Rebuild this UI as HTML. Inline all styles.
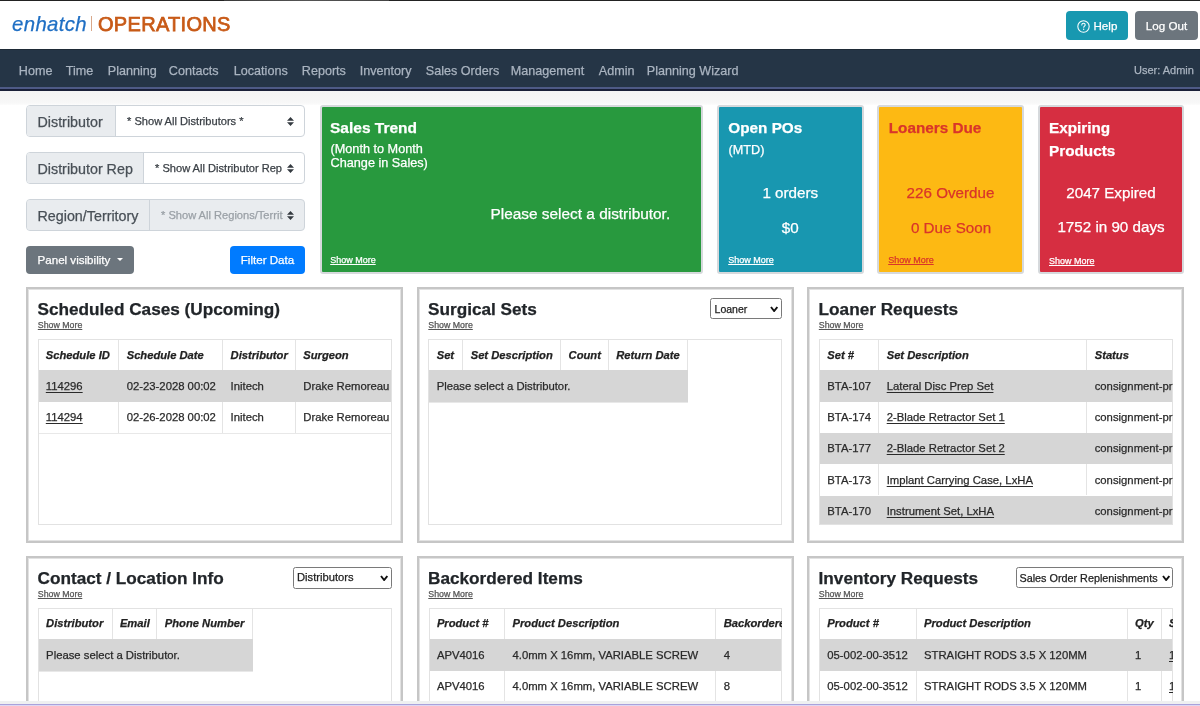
<!DOCTYPE html>
<html><head><meta charset="utf-8">
<style>
*{box-sizing:border-box;margin:0;padding:0}
html,body{width:1200px;height:706px;overflow:hidden;background:#fff;text-decoration-skip-ink:none;-webkit-text-stroke:0.25px currentColor;font-family:"Liberation Sans",sans-serif;color:#212529}
.abs{position:absolute}
#topline{left:0;top:0;width:1200px;height:1px;background:#222}
#header{left:0;top:1px;width:1200px;height:48px;background:#fff}
.logo1{left:12px;top:13px;font-size:20.4px;letter-spacing:0.35px;color:#1f6fc4;font-style:italic;line-height:1.15}
.logosep{left:90.5px;top:16px;width:1.2px;height:15px;background:#d9a88a}
.logo2{left:98px;top:12.5px;font-size:20px;font-weight:normal;-webkit-text-stroke:0.75px #c85a17;color:#c85a17;letter-spacing:0.3px;line-height:1.15}
.btn{position:absolute;border-radius:4px;color:#fff;font-size:12px;text-align:center;line-height:30px}
#help{left:1066px;top:11px;width:62px;height:29px;background:#1898b0;font-size:11.6px}
#logout{left:1135px;top:11px;width:63px;height:29px;background:#6c757d;font-size:11.6px}
#nav{left:0;top:49px;width:1200px;height:38px;background:#253546;border-top:1px solid #1e2a36}
#navline{left:0;top:87px;width:1200px;height:2px;background:#4e5a86}
#navline2{left:0;top:89px;width:1200px;height:1.5px;background:#1a2038}
.ni{position:absolute;top:64.4px;font-size:12.6px;color:#aab4c0;white-space:nowrap;line-height:1.15}
#shadow{left:0;top:90.5px;width:1200px;height:14px;background:linear-gradient(#f4f4f4,#f7f7f7 80%,#fcfcfc)}

.ig{position:absolute;left:26px;width:279px;height:32px;border:1px solid #ced4da;border-radius:4px;background:#fff;overflow:hidden}
.ig .lab{position:absolute;left:0;top:0;bottom:0;background:#e9ecef;border-right:1px solid #ced4da;font-size:14.3px;color:#495057;padding-left:10.5px;line-height:30px;padding-top:0.5px}
.ig .sel{position:absolute;top:0;bottom:0;right:0;font-size:11.1px;color:#3b4046;line-height:30px;padding-top:0px}
.updown{position:absolute;left:260px;top:11px;width:7px;height:9px}

.card{position:absolute;top:105px;height:169px;border:2px solid #d6d9dc;border-radius:3px;color:#fff}
.card .t{position:absolute;left:9px;top:11px;font-size:15.5px;font-weight:bold;line-height:23px}
.card .s{position:absolute;left:9px;font-size:11.5px;line-height:13.6px}
.card .c{position:absolute;left:0;right:0;text-align:center;font-size:14.5px}
.card .sm{position:absolute;left:9px;top:148px;font-size:9px;text-decoration:underline}

.panel{position:absolute;border:2px solid #c6c6c6;background:#fff;box-shadow:inset 0 0 0 1px #e2e2e2}
.ptitle{position:absolute;font-size:18px;font-weight:bold;color:#212529;white-space:nowrap}
.psm{position:absolute;font-size:9px;color:#555;text-decoration:underline;white-space:nowrap}
.tbl{position:absolute;border:1px solid #dee2e6;overflow:hidden;background:#fff}
.tbl table{border-collapse:collapse;font-size:11.5px;color:#212529}
.tbl td,.tbl th{height:31.3px;padding:0 8px;white-space:nowrap;text-align:left;border-right:1px solid #dee2e6}
.tbl th{font-style:italic;font-weight:bold}
.g{background:#d6d6d6}
.u{text-decoration:underline}
.psel{position:absolute;border:1px solid #767676;border-radius:3px;background:#fff;font-size:11.5px;color:#000;padding-left:3px;line-height:19px}
.chev{position:absolute;right:5px;top:6px;width:9px;height:7px}
#botline{left:0;top:704px;width:1200px;height:2px;background:#b7b2e0}
</style></head><body><div style="will-change:transform;position:absolute;left:0;top:0;width:1200px;height:706px">
<div id="topline" class="abs"></div><div class="abs" style="left:224px;top:0;width:165px;height:1px;background:linear-gradient(90deg,#3a3a3a,#555 50%,#444)"></div>
<div id="header" class="abs"></div>
<div class="abs logo1">enhatch</div>
<div class="abs logosep"></div>
<div class="abs logo2">OPERATIONS</div>
<div id="help" class="btn"><svg width="13" height="13" viewBox="0 0 16 16" style="position:absolute;left:11px;top:8.5px"><circle cx="8" cy="8" r="7" fill="none" stroke="#fff" stroke-width="1.3"/><path d="M5.9 6.1c0-1.2 1-2 2.1-2s2.1.8 2.1 1.9c0 1.4-1.8 1.5-1.8 2.8" fill="none" stroke="#fff" stroke-width="1.3" stroke-linecap="round"/><circle cx="8.2" cy="11.4" r=".8" fill="#fff"/></svg><span style="position:absolute;left:27.5px">Help</span></div>
<div id="logout" class="btn">Log Out</div>

<div id="nav" class="abs"></div>
<div id="navline" class="abs"></div>
<div id="navline2" class="abs"></div>
<span class="ni" style="left:18.8px">Home</span>
<span class="ni" style="left:65.8px">Time</span>
<span class="ni" style="left:107.8px">Planning</span>
<span class="ni" style="left:168.8px">Contacts</span>
<span class="ni" style="left:233.8px">Locations</span>
<span class="ni" style="left:301.8px">Reports</span>
<span class="ni" style="left:359.8px">Inventory</span>
<span class="ni" style="left:425.8px">Sales Orders</span>
<span class="ni" style="left:510.8px">Management</span>
<span class="ni" style="left:598.8px">Admin</span>
<span class="ni" style="left:646.8px">Planning Wizard</span>
<span class="ni" style="left:1134px;font-size:11px;top:63.8px">User: Admin</span>
<div id="shadow" class="abs"></div>

<!-- filters -->
<div class="ig" style="top:105px"><div class="lab" style="width:89px">Distributor</div><div class="sel" style="left:89px;padding-left:11px">* Show All Distributors *</div><svg class="updown" width="7" height="9" viewBox="0 0 7 9"><path d="M3.5 0L7 3.8H0z M0 5.2H7L3.5 9z" fill="#343a40"/></svg></div>
<div class="ig" style="top:152px"><div class="lab" style="width:117px">Distributor Rep</div><div class="sel" style="left:117px;padding-left:11px">* Show All Distributor Rep</div><svg class="updown" width="7" height="9" viewBox="0 0 7 9"><path d="M3.5 0L7 3.8H0z M0 5.2H7L3.5 9z" fill="#343a40"/></svg></div>
<div class="ig" style="top:199px;background:#e9ecef"><div class="lab" style="width:123px">Region/Territory</div><div class="sel" style="left:123px;padding-left:11px;color:#9aa0a6">* Show All Regions/Territ</div><svg class="updown" width="7" height="9" viewBox="0 0 7 9"><path d="M3.5 0L7 3.8H0z M0 5.2H7L3.5 9z" fill="#343a40"/></svg></div>

<div class="btn" style="left:26px;top:245.5px;width:108px;height:28px;background:#6c757d;text-align:left;padding-left:11.5px;font-size:11.6px;line-height:27.5px">Panel visibility<svg width="6" height="3" viewBox="0 0 6 3" style="position:absolute;left:90.5px;top:12.5px"><path d="M0 0H6L3 3z" fill="#fff"/></svg></div>
<div class="btn" style="left:230px;top:245.5px;width:75px;height:28px;background:#007bff;font-size:11.6px;line-height:27.5px">Filter Data</div>

<!-- cards -->
<div class="card" style="left:320px;width:383px;background:#28993e"></div>
<div class="card" style="left:717px;width:147px;background:#1897b0"></div>
<div class="card" style="left:877px;width:147px;background:#fdb913"></div>
<div class="card" style="left:1038px;width:146px;background:#d62e41"></div>
<div style="position:absolute;top:118.87px;font-size:15.5px;color:#fff;white-space:nowrap;line-height:normal;font-weight:bold;left:330.00px;">Sales Trend</div>
<div style="position:absolute;top:142.21px;font-size:12.7px;color:#fff;white-space:nowrap;line-height:normal;left:330.50px;">(Month to Month</div>
<div style="position:absolute;top:155.81px;font-size:12.7px;color:#fff;white-space:nowrap;line-height:normal;left:330.50px;">Change in Sales)</div>
<div style="position:absolute;top:205.36px;font-size:15.4px;color:#fff;white-space:nowrap;line-height:normal;left:490.50px;">Please select a distributor.</div>
<div style="position:absolute;top:255.35px;font-size:9px;color:#fff;white-space:nowrap;line-height:normal;left:330.20px;text-decoration:underline;text-underline-offset:1px;">Show More</div>
<div style="position:absolute;top:118.85px;font-size:15.3px;color:#fff;white-space:nowrap;line-height:normal;font-weight:bold;left:728.30px;">Open POs</div>
<div style="position:absolute;top:142.61px;font-size:12.7px;color:#fff;white-space:nowrap;line-height:normal;left:728.50px;">(MTD)</div>
<div style="position:absolute;top:183.84px;font-size:15.2px;color:#fff;white-space:nowrap;line-height:normal;left:640.30px;width:300px;text-align:center;">1 orders</div>
<div style="position:absolute;top:218.74px;font-size:15.2px;color:#fff;white-space:nowrap;line-height:normal;left:640.30px;width:300px;text-align:center;">$0</div>
<div style="position:absolute;top:255.16px;font-size:9px;color:#fff;white-space:nowrap;line-height:normal;left:728.20px;text-decoration:underline;text-underline-offset:1px;">Show More</div>
<div style="position:absolute;top:118.65px;font-size:15.3px;color:#d9352a;white-space:nowrap;line-height:normal;font-weight:bold;left:888.70px;">Loaners Due</div>
<div style="position:absolute;top:183.84px;font-size:15.2px;color:#d9352a;white-space:nowrap;line-height:normal;left:800.50px;width:300px;text-align:center;">226 Overdue</div>
<div style="position:absolute;top:218.74px;font-size:15.2px;color:#d9352a;white-space:nowrap;line-height:normal;left:801.00px;width:300px;text-align:center;">0 Due Soon</div>
<div style="position:absolute;top:255.16px;font-size:9px;color:#d9352a;white-space:nowrap;line-height:normal;left:888.20px;text-decoration:underline;text-underline-offset:1px;">Show More</div>
<div style="position:absolute;top:118.85px;font-size:15.3px;color:#fff;white-space:nowrap;line-height:normal;font-weight:bold;left:1049.00px;">Expiring</div>
<div style="position:absolute;top:141.65px;font-size:15.3px;color:#fff;white-space:nowrap;line-height:normal;font-weight:bold;left:1049.00px;">Products</div>
<div style="position:absolute;top:184.04px;font-size:15.2px;color:#fff;white-space:nowrap;line-height:normal;left:961.00px;width:300px;text-align:center;">2047 Expired</div>
<div style="position:absolute;top:218.44px;font-size:15.2px;color:#fff;white-space:nowrap;line-height:normal;left:961.00px;width:300px;text-align:center;">1752 in 90 days</div>
<div style="position:absolute;top:255.85px;font-size:9px;color:#fff;white-space:nowrap;line-height:normal;left:1049.00px;text-decoration:underline;text-underline-offset:1px;">Show More</div>

<!-- panels row 1 -->
<div class="panel" style="left:26px;top:287px;width:377px;height:256px"></div>
<div class="panel" style="left:417px;top:287px;width:377px;height:256px"></div>
<div class="panel" style="left:807px;top:287px;width:377px;height:256px"></div>
<div class="panel" style="left:26px;top:556px;width:377px;height:170px"></div>
<div class="panel" style="left:417px;top:556px;width:377px;height:170px"></div>
<div class="panel" style="left:807px;top:556px;width:377px;height:170px"></div>
<div style="position:absolute;left:37.50px;top:299.23px;font-size:17.2px;color:#212529;white-space:nowrap;line-height:normal;font-weight:bold;">Scheduled Cases (Upcoming)</div>
<div style="position:absolute;left:37.80px;top:319.84px;font-size:8.8px;color:#555;white-space:nowrap;line-height:normal;text-decoration:underline;text-underline-offset:1px;">Show More</div>
<div style="position:absolute;left:37.5px;top:339px;width:354.5px;height:185.5px;overflow:hidden">
<div style="position:absolute;left:0px;top:0px;width:354.5px;height:185.5px;border:1px solid #e2e2e2;background:#fff;overflow:hidden">
<div style="position:absolute;left:0;top:30.30px;width:354.5px;height:31.50px;background:#d6d6d6"></div>
<div style="position:absolute;left:79.90px;top:-1px;width:1px;height:31.30px;background:#e4e4e4"></div>
<div style="position:absolute;left:79.90px;top:61.80px;width:1px;height:31.50px;background:#e4e4e4"></div>
<div style="position:absolute;left:183.80px;top:-1px;width:1px;height:31.30px;background:#e4e4e4"></div>
<div style="position:absolute;left:183.80px;top:61.80px;width:1px;height:31.50px;background:#e4e4e4"></div>
<div style="position:absolute;left:256.50px;top:-1px;width:1px;height:31.30px;background:#e4e4e4"></div>
<div style="position:absolute;left:256.50px;top:61.80px;width:1px;height:31.50px;background:#e4e4e4"></div>
<div style="position:absolute;left:0;top:93.30px;width:354.5px;height:1px;background:#e8e8e8"></div>
</div>
<div style="position:absolute;left:8.30px;top:9.61px;font-size:11.2px;color:#222;white-space:nowrap;line-height:normal;font-weight:bold;font-style:italic;">Schedule ID</div>
<div style="position:absolute;left:89.20px;top:9.61px;font-size:11.2px;color:#222;white-space:nowrap;line-height:normal;font-weight:bold;font-style:italic;">Schedule Date</div>
<div style="position:absolute;left:193.10px;top:9.61px;font-size:11.2px;color:#222;white-space:nowrap;line-height:normal;font-weight:bold;font-style:italic;">Distributor</div>
<div style="position:absolute;left:265.80px;top:9.61px;font-size:11.2px;color:#222;white-space:nowrap;line-height:normal;font-weight:bold;font-style:italic;">Surgeon</div>
<div style="position:absolute;left:8.30px;top:40.72px;font-size:11.3px;color:#2a2a2a;white-space:nowrap;line-height:normal;text-decoration:underline;text-underline-offset:1.5px;">114296</div>
<div style="position:absolute;left:89.20px;top:40.72px;font-size:11.3px;color:#2a2a2a;white-space:nowrap;line-height:normal;">02-23-2028 00:02</div>
<div style="position:absolute;left:193.10px;top:40.72px;font-size:11.3px;color:#2a2a2a;white-space:nowrap;line-height:normal;">Initech</div>
<div style="position:absolute;left:265.80px;top:40.72px;font-size:11.3px;color:#2a2a2a;white-space:nowrap;line-height:normal;">Drake Remoreau</div>
<div style="position:absolute;left:8.30px;top:72.22px;font-size:11.3px;color:#2a2a2a;white-space:nowrap;line-height:normal;text-decoration:underline;text-underline-offset:1.5px;">114294</div>
<div style="position:absolute;left:89.20px;top:72.22px;font-size:11.3px;color:#2a2a2a;white-space:nowrap;line-height:normal;">02-26-2028 00:02</div>
<div style="position:absolute;left:193.10px;top:72.22px;font-size:11.3px;color:#2a2a2a;white-space:nowrap;line-height:normal;">Initech</div>
<div style="position:absolute;left:265.80px;top:72.22px;font-size:11.3px;color:#2a2a2a;white-space:nowrap;line-height:normal;">Drake Remoreau</div>
</div>
<div style="position:absolute;left:428.00px;top:299.23px;font-size:17.2px;color:#212529;white-space:nowrap;line-height:normal;font-weight:bold;">Surgical Sets</div>
<div style="position:absolute;left:428.30px;top:319.84px;font-size:8.8px;color:#555;white-space:nowrap;line-height:normal;text-decoration:underline;text-underline-offset:1px;">Show More</div>
<div style="position:absolute;left:710.4px;top:298.4px;width:71.20000000000005px;height:21.0px;border:1px solid #7a7a7a;border-radius:2.5px;background:#fff"></div>
<div style="position:absolute;left:714.60px;top:303.10px;font-size:10.5px;color:#222;white-space:nowrap;line-height:normal;">Loaner</div>
<svg style="position:absolute;left:770.1px;top:306.3px" width="8.3" height="6" viewBox="0 0 8.3 6"><path d="M1 1L4.15 5L7.300000000000001 1" fill="none" stroke="#111" stroke-width="1.9"/></svg>
<div style="position:absolute;left:428.4px;top:339px;width:353.6px;height:185.5px;overflow:hidden">
<div style="position:absolute;left:0px;top:0px;width:353.6px;height:185.5px;border:1px solid #e2e2e2;background:#fff;overflow:hidden">
<div style="position:absolute;left:0;top:30.30px;width:258.80000000000007px;height:31.50px;background:#d6d6d6"></div>
<div style="position:absolute;left:33.00px;top:-1px;width:1px;height:31.30px;background:#e4e4e4"></div>
<div style="position:absolute;left:130.90px;top:-1px;width:1px;height:31.30px;background:#e4e4e4"></div>
<div style="position:absolute;left:178.60px;top:-1px;width:1px;height:31.30px;background:#e4e4e4"></div>
<div style="position:absolute;left:257.80px;top:-1px;width:1px;height:31.30px;background:#e4e4e4"></div>
<div style="position:absolute;left:0;top:61.80px;width:258.80000000000007px;height:1px;background:#e8e8e8"></div>
</div>
<div style="position:absolute;left:8.30px;top:9.61px;font-size:11.2px;color:#222;white-space:nowrap;line-height:normal;font-weight:bold;font-style:italic;">Set</div>
<div style="position:absolute;left:42.30px;top:9.61px;font-size:11.2px;color:#222;white-space:nowrap;line-height:normal;font-weight:bold;font-style:italic;">Set Description</div>
<div style="position:absolute;left:140.20px;top:9.61px;font-size:11.2px;color:#222;white-space:nowrap;line-height:normal;font-weight:bold;font-style:italic;">Count</div>
<div style="position:absolute;left:187.90px;top:9.61px;font-size:11.2px;color:#222;white-space:nowrap;line-height:normal;font-weight:bold;font-style:italic;">Return Date</div>
<div style="position:absolute;left:8.30px;top:40.72px;font-size:11.3px;color:#2a2a2a;white-space:nowrap;line-height:normal;">Please select a Distributor.</div>
</div>
<div style="position:absolute;left:818.60px;top:299.23px;font-size:17.2px;color:#212529;white-space:nowrap;line-height:normal;font-weight:bold;">Loaner Requests</div>
<div style="position:absolute;left:818.80px;top:319.84px;font-size:8.8px;color:#555;white-space:nowrap;line-height:normal;text-decoration:underline;text-underline-offset:1px;">Show More</div>
<div style="position:absolute;left:819px;top:339px;width:354px;height:185.5px;overflow:hidden">
<div style="position:absolute;left:0px;top:0px;width:354px;height:185.5px;border:1px solid #e2e2e2;background:#fff;overflow:hidden">
<div style="position:absolute;left:0;top:30.30px;width:354px;height:31.30px;background:#d6d6d6"></div>
<div style="position:absolute;left:0;top:92.90px;width:354px;height:31.30px;background:#d6d6d6"></div>
<div style="position:absolute;left:0;top:155.50px;width:354px;height:31.30px;background:#d6d6d6"></div>
<div style="position:absolute;left:58.40px;top:-1px;width:1px;height:31.30px;background:#e4e4e4"></div>
<div style="position:absolute;left:58.40px;top:61.60px;width:1px;height:31.30px;background:#e4e4e4"></div>
<div style="position:absolute;left:58.40px;top:124.20px;width:1px;height:31.30px;background:#e4e4e4"></div>
<div style="position:absolute;left:266.40px;top:-1px;width:1px;height:31.30px;background:#e4e4e4"></div>
<div style="position:absolute;left:266.40px;top:61.60px;width:1px;height:31.30px;background:#e4e4e4"></div>
<div style="position:absolute;left:266.40px;top:124.20px;width:1px;height:31.30px;background:#e4e4e4"></div>
<div style="position:absolute;left:0;top:186.80px;width:354px;height:1px;background:#e8e8e8"></div>
</div>
<div style="position:absolute;left:8.30px;top:9.61px;font-size:11.2px;color:#222;white-space:nowrap;line-height:normal;font-weight:bold;font-style:italic;">Set #</div>
<div style="position:absolute;left:67.70px;top:9.61px;font-size:11.2px;color:#222;white-space:nowrap;line-height:normal;font-weight:bold;font-style:italic;">Set Description</div>
<div style="position:absolute;left:275.70px;top:9.61px;font-size:11.2px;color:#222;white-space:nowrap;line-height:normal;font-weight:bold;font-style:italic;">Status</div>
<div style="position:absolute;left:8.30px;top:40.62px;font-size:11.3px;color:#2a2a2a;white-space:nowrap;line-height:normal;">BTA-107</div>
<div style="position:absolute;left:67.70px;top:40.62px;font-size:11.3px;color:#2a2a2a;white-space:nowrap;line-height:normal;text-decoration:underline;text-underline-offset:1.5px;">Lateral Disc Prep Set</div>
<div style="position:absolute;left:275.70px;top:40.62px;font-size:11.3px;color:#2a2a2a;white-space:nowrap;line-height:normal;">consignment-pr</div>
<div style="position:absolute;left:8.30px;top:71.92px;font-size:11.3px;color:#2a2a2a;white-space:nowrap;line-height:normal;">BTA-174</div>
<div style="position:absolute;left:67.70px;top:71.92px;font-size:11.3px;color:#2a2a2a;white-space:nowrap;line-height:normal;text-decoration:underline;text-underline-offset:1.5px;">2-Blade Retractor Set 1</div>
<div style="position:absolute;left:275.70px;top:71.92px;font-size:11.3px;color:#2a2a2a;white-space:nowrap;line-height:normal;">consignment-pr</div>
<div style="position:absolute;left:8.30px;top:103.22px;font-size:11.3px;color:#2a2a2a;white-space:nowrap;line-height:normal;">BTA-177</div>
<div style="position:absolute;left:67.70px;top:103.22px;font-size:11.3px;color:#2a2a2a;white-space:nowrap;line-height:normal;text-decoration:underline;text-underline-offset:1.5px;">2-Blade Retractor Set 2</div>
<div style="position:absolute;left:275.70px;top:103.22px;font-size:11.3px;color:#2a2a2a;white-space:nowrap;line-height:normal;">consignment-pr</div>
<div style="position:absolute;left:8.30px;top:134.52px;font-size:11.3px;color:#2a2a2a;white-space:nowrap;line-height:normal;">BTA-173</div>
<div style="position:absolute;left:67.70px;top:134.52px;font-size:11.3px;color:#2a2a2a;white-space:nowrap;line-height:normal;text-decoration:underline;text-underline-offset:1.5px;">Implant Carrying Case, LxHA</div>
<div style="position:absolute;left:275.70px;top:134.52px;font-size:11.3px;color:#2a2a2a;white-space:nowrap;line-height:normal;">consignment-pr</div>
<div style="position:absolute;left:8.30px;top:165.82px;font-size:11.3px;color:#2a2a2a;white-space:nowrap;line-height:normal;">BTA-170</div>
<div style="position:absolute;left:67.70px;top:165.82px;font-size:11.3px;color:#2a2a2a;white-space:nowrap;line-height:normal;text-decoration:underline;text-underline-offset:1.5px;">Instrument Set, LxHA</div>
<div style="position:absolute;left:275.70px;top:165.82px;font-size:11.3px;color:#2a2a2a;white-space:nowrap;line-height:normal;">consignment-pr</div>
</div>
<div style="position:absolute;left:37.50px;top:568.23px;font-size:17.2px;color:#212529;white-space:nowrap;line-height:normal;font-weight:bold;">Contact / Location Info</div>
<div style="position:absolute;left:37.80px;top:588.84px;font-size:8.8px;color:#555;white-space:nowrap;line-height:normal;text-decoration:underline;text-underline-offset:1px;">Show More</div>
<div style="position:absolute;left:293.4px;top:567.2px;width:98.20000000000005px;height:21.399999999999977px;border:1px solid #7a7a7a;border-radius:2.5px;background:#fff"></div>
<div style="position:absolute;left:297.00px;top:571.46px;font-size:11.2px;color:#222;white-space:nowrap;line-height:normal;">Distributors</div>
<svg style="position:absolute;left:380px;top:575px" width="8.3" height="6" viewBox="0 0 8.3 6"><path d="M1 1L4.15 5L7.300000000000001 1" fill="none" stroke="#111" stroke-width="1.9"/></svg>
<div style="position:absolute;left:37.8px;top:607.5px;width:354.2px;height:138.5px;overflow:hidden">
<div style="position:absolute;left:0px;top:0px;width:354.2px;height:138.5px;border:1px solid #e2e2e2;background:#fff;overflow:hidden">
<div style="position:absolute;left:0;top:30.70px;width:213.89999999999998px;height:31.60px;background:#d6d6d6"></div>
<div style="position:absolute;left:72.80px;top:-1px;width:1px;height:31.70px;background:#e4e4e4"></div>
<div style="position:absolute;left:117.70px;top:-1px;width:1px;height:31.70px;background:#e4e4e4"></div>
<div style="position:absolute;left:212.90px;top:-1px;width:1px;height:31.70px;background:#e4e4e4"></div>
<div style="position:absolute;left:0;top:62.30px;width:213.89999999999998px;height:1px;background:#e8e8e8"></div>
</div>
<div style="position:absolute;left:8.30px;top:9.81px;font-size:11.2px;color:#222;white-space:nowrap;line-height:normal;font-weight:bold;font-style:italic;">Distributor</div>
<div style="position:absolute;left:82.10px;top:9.81px;font-size:11.2px;color:#222;white-space:nowrap;line-height:normal;font-weight:bold;font-style:italic;">Email</div>
<div style="position:absolute;left:127.00px;top:9.81px;font-size:11.2px;color:#222;white-space:nowrap;line-height:normal;font-weight:bold;font-style:italic;">Phone Number</div>
<div style="position:absolute;left:8.30px;top:41.17px;font-size:11.3px;color:#2a2a2a;white-space:nowrap;line-height:normal;">Please select a Distributor.</div>
</div>
<div style="position:absolute;left:428.00px;top:568.23px;font-size:17.2px;color:#212529;white-space:nowrap;line-height:normal;font-weight:bold;">Backordered Items</div>
<div style="position:absolute;left:428.30px;top:588.84px;font-size:8.8px;color:#555;white-space:nowrap;line-height:normal;text-decoration:underline;text-underline-offset:1px;">Show More</div>
<div style="position:absolute;left:428.6px;top:607.5px;width:353.4px;height:138.5px;overflow:hidden">
<div style="position:absolute;left:0px;top:0px;width:353.4px;height:138.5px;border:1px solid #e2e2e2;background:#fff;overflow:hidden">
<div style="position:absolute;left:0;top:30.70px;width:353.4px;height:31.60px;background:#d6d6d6"></div>
<div style="position:absolute;left:74.60px;top:-1px;width:1px;height:31.70px;background:#e4e4e4"></div>
<div style="position:absolute;left:74.60px;top:62.30px;width:1px;height:31.60px;background:#e4e4e4"></div>
<div style="position:absolute;left:285.90px;top:-1px;width:1px;height:31.70px;background:#e4e4e4"></div>
<div style="position:absolute;left:285.90px;top:62.30px;width:1px;height:31.60px;background:#e4e4e4"></div>
<div style="position:absolute;left:0;top:93.90px;width:353.4px;height:1px;background:#e8e8e8"></div>
</div>
<div style="position:absolute;left:8.30px;top:9.81px;font-size:11.2px;color:#222;white-space:nowrap;line-height:normal;font-weight:bold;font-style:italic;">Product #</div>
<div style="position:absolute;left:83.90px;top:9.81px;font-size:11.2px;color:#222;white-space:nowrap;line-height:normal;font-weight:bold;font-style:italic;">Product Description</div>
<div style="position:absolute;left:295.20px;top:9.81px;font-size:11.2px;color:#222;white-space:nowrap;line-height:normal;font-weight:bold;font-style:italic;">Backordered</div>
<div style="position:absolute;left:8.30px;top:41.17px;font-size:11.3px;color:#2a2a2a;white-space:nowrap;line-height:normal;">APV4016</div>
<div style="position:absolute;left:83.90px;top:41.17px;font-size:11.3px;color:#2a2a2a;white-space:nowrap;line-height:normal;">4.0mm X 16mm, VARIABLE SCREW</div>
<div style="position:absolute;left:295.20px;top:41.17px;font-size:11.3px;color:#2a2a2a;white-space:nowrap;line-height:normal;">4</div>
<div style="position:absolute;left:8.30px;top:72.77px;font-size:11.3px;color:#2a2a2a;white-space:nowrap;line-height:normal;">APV4016</div>
<div style="position:absolute;left:83.90px;top:72.77px;font-size:11.3px;color:#2a2a2a;white-space:nowrap;line-height:normal;">4.0mm X 16mm, VARIABLE SCREW</div>
<div style="position:absolute;left:295.20px;top:72.77px;font-size:11.3px;color:#2a2a2a;white-space:nowrap;line-height:normal;">8</div>
</div>
<div style="position:absolute;left:818.60px;top:568.23px;font-size:17.2px;color:#212529;white-space:nowrap;line-height:normal;font-weight:bold;">Inventory Requests</div>
<div style="position:absolute;left:818.80px;top:588.84px;font-size:8.8px;color:#555;white-space:nowrap;line-height:normal;text-decoration:underline;text-underline-offset:1px;">Show More</div>
<div style="position:absolute;left:1015.5px;top:567.2px;width:157.0px;height:21.299999999999955px;border:1px solid #7a7a7a;border-radius:2.5px;background:#fff"></div>
<div style="position:absolute;left:1019.50px;top:572.23px;font-size:10.8px;color:#222;white-space:nowrap;line-height:normal;">Sales Order Replenishments</div>
<svg style="position:absolute;left:1161.5px;top:575px" width="8.3" height="6" viewBox="0 0 8.3 6"><path d="M1 1L4.15 5L7.300000000000001 1" fill="none" stroke="#111" stroke-width="1.9"/></svg>
<div style="position:absolute;left:819px;top:607.5px;width:354px;height:138.5px;overflow:hidden">
<div style="position:absolute;left:0px;top:0px;width:354px;height:138.5px;border:1px solid #e2e2e2;background:#fff;overflow:hidden">
<div style="position:absolute;left:0;top:30.70px;width:354px;height:31.60px;background:#d6d6d6"></div>
<div style="position:absolute;left:95.70px;top:-1px;width:1px;height:31.70px;background:#e4e4e4"></div>
<div style="position:absolute;left:95.70px;top:62.30px;width:1px;height:31.60px;background:#e4e4e4"></div>
<div style="position:absolute;left:306.70px;top:-1px;width:1px;height:31.70px;background:#e4e4e4"></div>
<div style="position:absolute;left:306.70px;top:62.30px;width:1px;height:31.60px;background:#e4e4e4"></div>
<div style="position:absolute;left:340.70px;top:-1px;width:1px;height:31.70px;background:#e4e4e4"></div>
<div style="position:absolute;left:340.70px;top:62.30px;width:1px;height:31.60px;background:#e4e4e4"></div>
<div style="position:absolute;left:0;top:93.90px;width:354px;height:1px;background:#e8e8e8"></div>
</div>
<div style="position:absolute;left:8.30px;top:9.81px;font-size:11.2px;color:#222;white-space:nowrap;line-height:normal;font-weight:bold;font-style:italic;">Product #</div>
<div style="position:absolute;left:105.00px;top:9.81px;font-size:11.2px;color:#222;white-space:nowrap;line-height:normal;font-weight:bold;font-style:italic;">Product Description</div>
<div style="position:absolute;left:316.00px;top:9.81px;font-size:11.2px;color:#222;white-space:nowrap;line-height:normal;font-weight:bold;font-style:italic;">Qty</div>
<div style="position:absolute;left:350.00px;top:9.81px;font-size:11.2px;color:#222;white-space:nowrap;line-height:normal;font-weight:bold;font-style:italic;">Status</div>
<div style="position:absolute;left:8.30px;top:41.17px;font-size:11.3px;color:#2a2a2a;white-space:nowrap;line-height:normal;">05-002-00-3512</div>
<div style="position:absolute;left:105.00px;top:41.17px;font-size:11.3px;color:#2a2a2a;white-space:nowrap;line-height:normal;">STRAIGHT RODS 3.5 X 120MM</div>
<div style="position:absolute;left:316.00px;top:41.17px;font-size:11.3px;color:#2a2a2a;white-space:nowrap;line-height:normal;">1</div>
<div style="position:absolute;left:350.00px;top:41.17px;font-size:11.3px;color:#2a2a2a;white-space:nowrap;line-height:normal;text-decoration:underline;text-underline-offset:1.5px;">1</div>
<div style="position:absolute;left:8.30px;top:72.77px;font-size:11.3px;color:#2a2a2a;white-space:nowrap;line-height:normal;">05-002-00-3512</div>
<div style="position:absolute;left:105.00px;top:72.77px;font-size:11.3px;color:#2a2a2a;white-space:nowrap;line-height:normal;">STRAIGHT RODS 3.5 X 120MM</div>
<div style="position:absolute;left:316.00px;top:72.77px;font-size:11.3px;color:#2a2a2a;white-space:nowrap;line-height:normal;">1</div>
<div style="position:absolute;left:350.00px;top:72.77px;font-size:11.3px;color:#2a2a2a;white-space:nowrap;line-height:normal;text-decoration:underline;text-underline-offset:1.5px;">1</div>
</div>

<div class="abs" style="left:0;top:701px;width:1200px;height:2.5px;background:#eff0f1"></div><div class="abs" style="left:0;top:703.5px;width:1200px;height:1.5px;background:#a9a2dc"></div><div class="abs" style="left:0;top:705px;width:1200px;height:1px;background:#ddd8f3"></div>
</div></body></html>
